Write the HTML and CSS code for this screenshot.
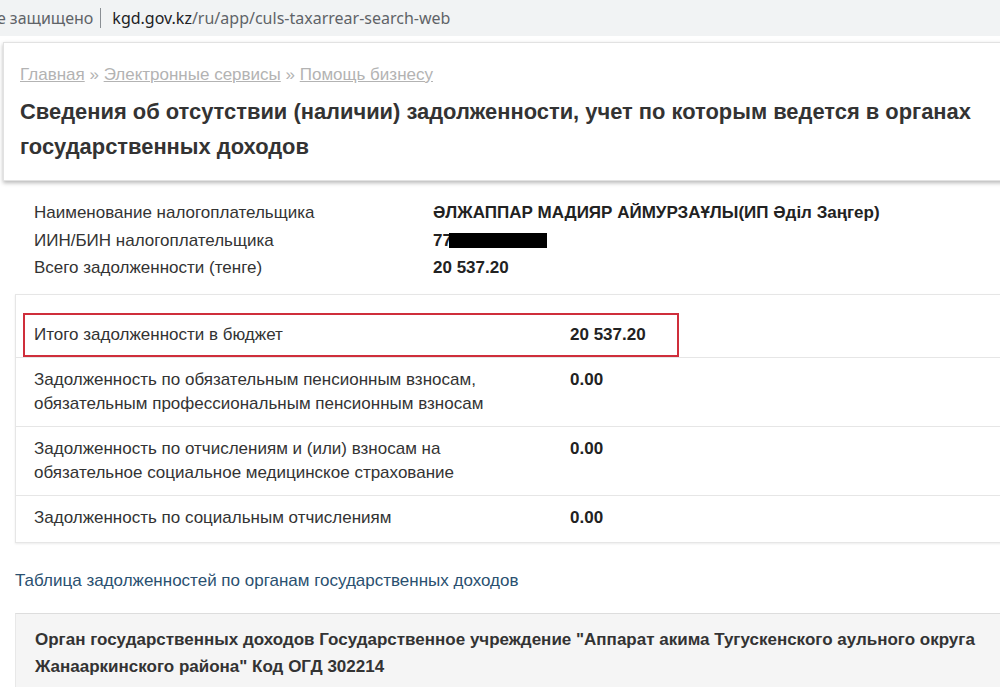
FILE: index.html
```html
<!DOCTYPE html>
<html lang="ru">
<head>
<meta charset="utf-8">
<title>Сведения об отсутствии (наличии) задолженности</title>
<link rel="stylesheet" href="styles.css">
</head>
<body>
<div class="addr">
  <span class="lock">Не защищено</span><span class="sep"></span><span class="host">kgd.gov.kz</span><span class="path">/ru/app/culs-taxarrear-search-web</span>
</div>
<div class="head-card">
  <div class="crumbs"><a href="#">Главная</a> » <a href="#">Электронные сервисы</a> » <a href="#">Помощь бизнесу</a></div>
  <h1 class="title">Сведения об отсутствии (наличии) задолженности, учет по которым ведется в органах государственных доходов</h1>
</div>
<div class="content">
  <div class="info">
    <div class="info-label">Наименование налогоплательщика</div>
    <div class="info-value">ӘЛЖАППАР МАДИЯР АЙМУРЗАҰЛЫ(ИП Әділ Заңгер)</div>
    <div class="info-label">ИИН/БИН налогоплательщика</div>
    <div class="info-value">77<span class="redact"></span></div>
    <div class="info-label">Всего задолженности (тенге)</div>
    <div class="info-value">20 537.20</div>
  </div>

  <div class="debts">
    <div class="row row-first">
      <div class="highlight">
        <div class="hl-label">Итого задолженности в бюджет</div>
        <div class="hl-value">20 537.20</div>
      </div>
    </div>
    <div class="row">
      <div class="label">Задолженность по обязательным пенсионным взносам, обязательным профессиональным пенсионным взносам</div>
      <div class="value">0.00</div>
    </div>
    <div class="row">
      <div class="label">Задолженность по отчислениям и (или) взносам на обязательное социальное медицинское страхование</div>
      <div class="value">0.00</div>
    </div>
    <div class="row row-last">
      <div class="label">Задолженность по социальным отчислениям</div>
      <div class="value">0.00</div>
    </div>
  </div>

  <a class="table-link" href="#">Таблица задолженностей по органам государственных доходов</a>

  <div class="organ">Орган государственных доходов Государственное учреждение "Аппарат акима Тугускенского аульного округа Жанааркинского района" Код ОГД 302214</div>
</div>
</body>
</html>
```

FILE: styles.css
```css
html, body {
  margin: 0;
  padding: 0;
  background: #ffffff;
  overflow: hidden;
}

body {
  width: 1000px;
  height: 687px;
  font-family: "Liberation Sans", Arial, sans-serif;
  font-size: 17px;
  color: #333333;
}

.addr {
  height: 36px;
  background: #f1f3f4;
  display: flex;
  align-items: center;
  white-space: nowrap;
  overflow: hidden;
  font-family: "Noto Sans", "Open Sans", sans-serif;
  font-size: 16px;
  color: #5f6368;
}

.lock {
  margin-left: -15px;
}

.sep {
  display: inline-block;
  width: 1px;
  height: 20px;
  background: #8a8f94;
  margin: 0 11px 0 7px;
}

.host {
  color: #202124;
}

.path {
  color: #5f6368;
}

.head-card {
  margin: 6px 0 0 3px;
  width: 1020px;
  box-sizing: border-box;
  padding: 21px 16px 16px 16px;
  background: #ffffff;
  border: 1px solid #e2e2e2;
  box-shadow: 0 2px 4px rgba(0, 0, 0, 0.28);
}

.crumbs {
  font-size: 17px;
  line-height: 22px;
  color: #b3b3b3;
}

.crumbs a {
  color: #b3b3b3;
  text-decoration: underline;
}

.title {
  margin: 8px 0 0 0;
  width: 985px;
  font-size: 21.9px;
  line-height: 35px;
  font-weight: bold;
  color: #333333;
}

.content {
  padding: 18px 0 0 15px;
  width: 1020px;
}

.info {
  display: grid;
  grid-template-columns: 399px 1fr;
  padding-left: 19px;
  line-height: 27.5px;
}

.info-value {
  font-weight: bold;
  color: #222222;
  display: flex;
  align-items: center;
}

.redact {
  display: inline-block;
  width: 98px;
  height: 15px;
  background: #000000;
  margin-left: -3px;
}

.debts {
  margin-top: 12px;
  border: 1px solid #e6e6e6;
  box-shadow: 0 1px 2px rgba(0, 0, 0, 0.08);
  line-height: 24px;
}

.row {
  display: grid;
  grid-template-columns: 536px 1fr;
  padding: 10px 0 10px 18px;
  border-bottom: 1px solid #e6e6e6;
}

.row-last {
  padding-bottom: 12px;
  border-bottom: none;
}

.row .label {
  padding-right: 40px;
}

.row .value {
  font-weight: bold;
  color: #222222;
}

.row-first {
  display: block;
  padding: 18px 0 0 7px;
}

.highlight {
  width: 656px;
  box-sizing: border-box;
  border: 2px solid #cf2e3b;
  display: grid;
  grid-template-columns: 545px 1fr;
  padding: 8px 0;
}

.hl-label {
  padding-left: 9px;
}

.hl-value {
  font-weight: bold;
  color: #222222;
}

.table-link {
  display: block;
  margin-top: 26px;
  line-height: 24px;
  color: #2a5070;
  text-decoration: none;
}

.organ {
  margin-top: 20px;
  padding: 12px 20px 14px 19px;
  background: #f5f5f5;
  border-top: 1px solid #dddddd;
  border-left: 1px solid #e8e8e8;
  font-weight: bold;
  line-height: 27px;
  color: #333333;
  width: 1000px;
}
```
